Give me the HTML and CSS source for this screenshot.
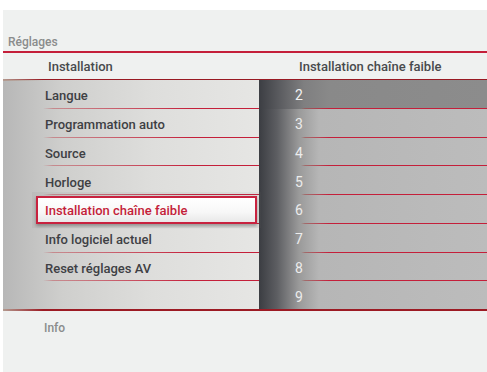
FILE: index.html
```html
<!DOCTYPE html>
<html lang="fr">
<head>
  <meta charset="UTF-8" />
  <title>Réglages</title>
  <link rel="stylesheet" href="styles.css">
</head>
<body>
  <div class="screen">
    <div class="title">Réglages</div>
    <div class="rule"></div>

    <div class="head">
      <div class="head-left">Installation</div>
      <div class="head-right">Installation chaîne faible</div>
    </div>

    <div class="panel">
      <div class="menu">
        <div class="item">Langue</div>
        <div class="item">Programmation auto</div>
        <div class="item">Source</div>
        <div class="item">Horloge</div>
        <div class="item selected"><span class="sel-box">Installation chaîne faible</span></div>
        <div class="item">Info logiciel actuel</div>
        <div class="item">Reset réglages AV</div>
        <div class="item empty"></div>
      </div>
      <div class="values">
        <div class="value focus">2</div>
        <div class="value">3</div>
        <div class="value">4</div>
        <div class="value">5</div>
        <div class="value">6</div>
        <div class="value">7</div>
        <div class="value">8</div>
        <div class="value last">9</div>
      </div>
    </div>

    <div class="info">Info</div>
  </div>
</body>
</html>
```

FILE: styles.css
```css
* {
  box-sizing: border-box;
}

body {
  margin: 0;
  background: #ffffff;
  font-family: Roboto, 'Liberation Sans', sans-serif;
  font-size: 13px;
  font-weight: 500;
}

.screen {
  margin: 10px 0 0 3px;
  height: 362px;
  background: #eff1f0;
  display: flex;
  flex-direction: column;
}

.title {
  height: 41px;
  padding: 25px 0 0 5px;
  line-height: 14px;
  font-size: 12px;
  color: #8a8c8c;
}

.rule {
  height: 2px;
  background: #c41f3a;
}

.head {
  height: 26px;
  display: flex;
  align-items: center;
  color: #484a4d;
}

.head-left {
  width: 256px;
  padding-left: 45px;
}

.head-right {
  padding-left: 40px;
}

/* main two-column panel */
.panel {
  display: flex;
  height: 232px;
  position: relative;
  border-top: 1px solid #981a23;
  border-bottom: 2px solid #9c1b24;
}

.panel::before,
.panel::after {
  content: "";
  position: absolute;
  left: 0;
  width: 40px;
  height: 2px;
  background: linear-gradient(to right, #b39a8f, rgba(156, 27, 36, 0));
}

.panel::before {
  top: -1px;
}

.panel::after {
  bottom: -2px;
}

.menu {
  width: 256px;
  background: linear-gradient(to right, #b7b7b7 0, #cfcfcd 60px, #dededc 150px, #e6e6e4 256px);
}

.item {
  height: 28.75px;
  display: flex;
  align-items: center;
  padding: 3px 0 0 42px;
  color: #3e4044;
  position: relative;
}

.item::after {
  content: "";
  position: absolute;
  left: 0;
  right: 0;
  bottom: 0;
  height: 1px;
  background: linear-gradient(to right, rgba(190, 40, 60, 0) 40px, rgba(190, 60, 70, 0.45) 50px, #c41f3a 190px);
}

.item.empty::after {
  display: none;
}

.item.selected {
  padding: 1px 2px 0 33px;
}

.sel-box {
  flex: 1;
  height: 28px;
  display: flex;
  align-items: center;
  padding: 1px 0 0 7px;
  color: #c41e3a;
  border: 2px solid #c8223f;
  background: linear-gradient(to bottom, #ffffff 0, #f7f7f7 60%, #e8e8e8 100%);
  box-shadow: 0 2px 3px rgba(0, 0, 0, 0.3), 0 0 0 4px rgba(120, 120, 120, 0.08);
  position: relative;
  z-index: 1;
}

.values {
  flex: 1;
  background: linear-gradient(to right, #3b3d42 0, #5d5e62 18px, #9a9a9a 40px, #b6b6b6 60px, #bcbcbc 100%);
}

.value {
  height: 28.75px;
  display: flex;
  align-items: center;
  padding: 2px 0 0 36px;
  color: #ececec;
  font-size: 14px;
  font-weight: 400;
  position: relative;
}

.value::after {
  content: "";
  position: absolute;
  left: 0;
  right: 0;
  bottom: 0;
  height: 1px;
  background: linear-gradient(to right, rgba(160, 60, 60, 0) 42px, rgba(160, 70, 70, 0.6) 46px, #c41f3a 70px);
}

.value.last::after {
  display: none;
}

.value.focus {
  background: linear-gradient(to right, #3c3e43 0, #5a5b5f 20px, #7f7f80 45px, #898989 70px, #8c8c8c 100%);
  color: #f2f2f2;
}

.info {
  padding: 10px 0 0 41px;
  font-size: 12px;
  color: #8a8c8c;
}
```
